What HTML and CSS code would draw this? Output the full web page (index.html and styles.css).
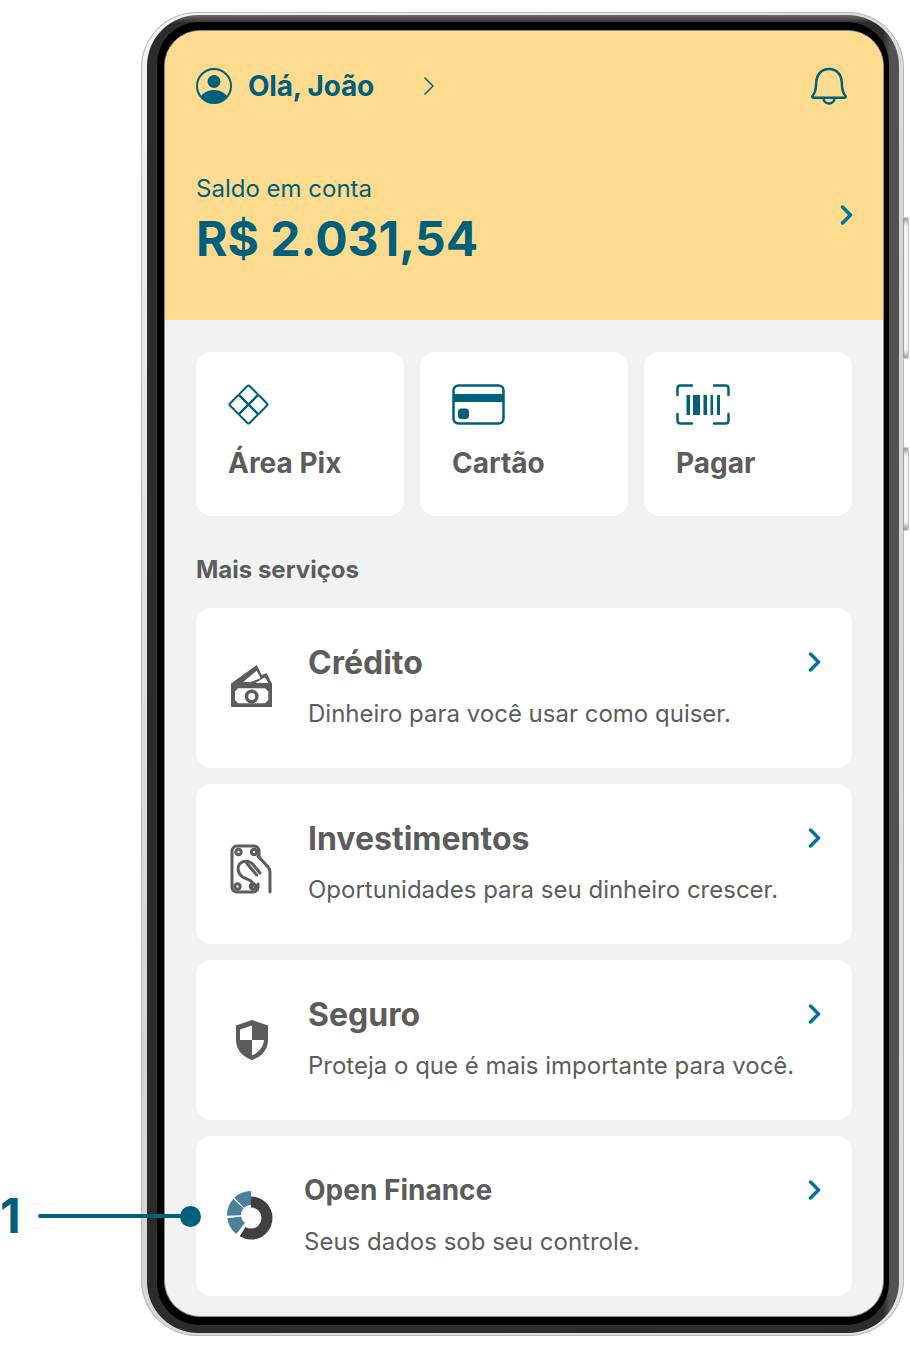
FILE: index.html
```html
<!DOCTYPE html>
<html lang="pt-BR">
    <head>
        <meta charset="UTF-8" />
        <meta name="viewport" content="width=device-width, initial-scale=1.0" />
        <title>Olá, João</title>
        <link rel="stylesheet" href="styles.css">
    </head>
    <body>
        <!--Callout-->
        <div class="callout">
            <span class="callout-num">1</span>
            <span class="callout-line"></span>
            <span class="callout-dot"></span>
        </div>

        <!--Phone frame-->
        <div class="phone">
            <span class="side-btn side-btn-a"></span>
            <span class="side-btn side-btn-b"></span>
            <div class="bezel">
                <div class="black">
                    <main class="screen">
                        <header class="top">
                            <div class="greet">
                                <svg class="avatar" viewBox="0 0 36 36">
                                    <defs><clipPath id="avatar-clip"><circle cx="18" cy="18" r="16.5"/></clipPath></defs>
                                    <circle cx="18" cy="13.5" r="6.5" class="ic-fill"/>
                                    <ellipse cx="18" cy="32" rx="14" ry="10" class="ic-fill" clip-path="url(#avatar-clip)"/>
                                    <circle cx="18" cy="18" r="17" class="ic-line" stroke-width="2"/>
                                </svg>
                                <span class="greet-name">Olá, João</span>
                                <svg class="greet-arrow" viewBox="0 0 12 20"><path d="M2 2l8 8-8 8" class="ic-line" stroke-width="1.5"/></svg>
                                <svg class="bell" viewBox="0 0 38 38">
                                    <path d="M2.5 29c2.6-3 3.6-5.5 3.6-12C6.100 8 11 2 19 2s12.900 6 12.900 15c0 6.500 1 9 3.600 12 .6.8.1 1.700-1 1.700H3.500c-1.100 0-1.600-.9-1-1.700z" class="ic-line" stroke-width="2.500"/>
                                    <path d="M13.500 31c0 3.200 2.400 5.500 5.500 5.500s5.500-2.300 5.500-5.500" class="ic-line" stroke-width="2.500"/>
                                </svg>
                            </div>
                            <div class="balance">
                                <div>
                                    <div class="balance-label">Saldo em conta</div>
                                    <div class="balance-value">R$ 2.031,54</div>
                                </div>
                                <svg class="chevron" viewBox="0 0 14 20"><path d="M2.500 2l8 8-8 8" class="ic-chev"/></svg>
                            </div>
                        </header>

                        <section class="shortcuts">
                            <a class="shortcut">
                                <svg class="shortcut-icon" viewBox="0 0 40 40">
                                    <g transform="rotate(45 20 20)" class="ic-line" stroke-width="2">
                                        <rect x="6.500" y="6.500" width="13.500" height="13.500" rx="1.500"/>
                                        <rect x="20" y="6.500" width="13.500" height="13.500" rx="1.500"/>
                                        <rect x="6.500" y="20" width="13.500" height="13.500" rx="1.500"/>
                                        <rect x="20" y="20" width="13.500" height="13.500" rx="1.500"/>
                                    </g>
                                </svg>
                                <span>Área Pix</span>
                            </a>
                            <a class="shortcut">
                                <svg class="shortcut-icon" viewBox="0 0 54 41">
                                    <rect x="1.500" y="1.500" width="50" height="38" rx="5" class="ic-line" stroke-width="2.500"/>
                                    <rect x="1" y="10" width="51" height="8" class="ic-fill"/>
                                    <rect x="6" y="24.500" width="11" height="10.500" rx="3.500" class="ic-fill"/>
                                </svg>
                                <span>Cartão</span>
                            </a>
                            <a class="shortcut">
                                <svg class="shortcut-icon" viewBox="0 0 54 41">
                                    <path d="M1.500 11V4.500c0-1.700 1.300-3 3-3H16M38 1.500h11.500c1.700 0 3 1.300 3 3V11M1.500 30v6.500c0 1.700 1.300 3 3 3H16M38 39.500h11.500c1.700 0 3-1.300 3-3V30" class="ic-line" stroke-width="2.500"/>
                                    <rect x="10.500" y="11" width="3.500" height="20" class="ic-fill"/>
                                    <rect x="17" y="11" width="7" height="20" class="ic-fill"/>
                                    <rect x="27.500" y="11" width="3.500" height="20" class="ic-fill"/>
                                    <rect x="34.500" y="11" width="2.500" height="20" class="ic-fill"/>
                                    <rect x="41" y="11" width="3" height="20" class="ic-fill"/>
                                </svg>
                                <span>Pagar</span>
                            </a>
                        </section>

                        <h2 class="section-title">Mais serviços</h2>

                        <section class="services">
                            <a class="service">
                                <span class="service-icon">
                                    <svg class="ic-money" viewBox="0 0 42 42">
                                        <path d="M0 18.500L25.700 0l5 10 5-1.700 5 10.200z" class="ic-gray"/>
                                        <path d="M12.300 16.700L25.700 5.700l4 7.600-10.700 4z" class="ic-white"/>
                                        <path d="M24 18.300l10-6 3.300 6z" class="ic-white"/>
                                        <rect x="0" y="18" width="41" height="24" class="ic-gray"/>
                                        <path d="M7 23.300h27l3.300 3.200v8.500L34 38.300H7L4 35v-8.500z" class="ic-white"/>
                                        <circle cx="20.700" cy="31.500" r="5.200" fill="none" stroke="#5c5c5c" stroke-width="3.500"/>
                                    </svg>
                                </span>
                                <span class="service-text">
                                    <span class="service-title">Crédito</span>
                                    <span class="service-sub">Dinheiro para você usar como quiser.</span>
                                </span>
                                <svg class="chevron" viewBox="0 0 14 20"><path d="M2.500 2l8 8-8 8" class="ic-chev"/></svg>
                            </a>
                            <a class="service">
                                <span class="service-icon">
                                    <svg class="ic-invest" viewBox="0 0 44 50">
                                        <g class="ic-gray-line">
                                            <path d="M29 13V7c0-2.800-2.200-5-5-5H7C4.200 2 2 4.200 2 7v36c0 2.800 2.200 5 5 5h16c2.800 0 5-2.200 5-5v-3"/>
                                            <circle cx="8.500" cy="8" r="2.700"/>
                                            <circle cx="24" cy="8" r="2.700"/>
                                            <circle cx="7.500" cy="42.500" r="2.700"/>
                                            <circle cx="23" cy="42.500" r="2.700"/>
                                            <path d="M28 12l10 11c1.300 1.400 2 3 2 5v20"/>
                                            <path d="M30 29L23 20.500c-3.500-4-9.500-4.500-13-1-3 3-2.500 9.500 2 13 3 2.300 8 3 10 5.500.8 1.200.8 3 .3 4.700"/>
                                            <path d="M16.700 19.300L26.700 31"/>
                                        </g>
                                    </svg>
                                </span>
                                <span class="service-text">
                                    <span class="service-title">Investimentos</span>
                                    <span class="service-sub">Oportunidades para seu dinheiro crescer.</span>
                                </span>
                                <svg class="chevron" viewBox="0 0 14 20"><path d="M2.500 2l8 8-8 8" class="ic-chev"/></svg>
                            </a>
                            <a class="service">
                                <span class="service-icon">
                                    <svg class="ic-shield" viewBox="0 0 32 40">
                                        <path d="M16 0l16 5.500V20c0 10-7 17-16 20C7 37 0 30 0 20V5.500z" class="ic-gray"/>
                                        <path d="M16 5.500L4 9.500V20h12z" class="ic-white"/>
                                        <path d="M16 20h12c-.8 7.500-5.500 12.500-12 15.500z" class="ic-white"/>
                                    </svg>
                                </span>
                                <span class="service-text">
                                    <span class="service-title">Seguro</span>
                                    <span class="service-sub">Proteja o que é mais importante para você.</span>
                                </span>
                                <svg class="chevron" viewBox="0 0 14 20"><path d="M2.500 2l8 8-8 8" class="ic-chev"/></svg>
                            </a>
                            <a class="service service-open">
                                <span class="service-icon">
                                    <svg class="ic-donut" viewBox="0 0 48 52">
                                        <circle cx="25" cy="29" r="16" pathLength="360" stroke-dasharray="212 360" transform="rotate(-90 25 29)" class="donut-dark"/>
                                        <circle cx="25" cy="26" r="17" pathLength="360" stroke-dasharray="44 360" transform="rotate(128 25 26)" class="donut-blue"/>
                                        <circle cx="25" cy="26" r="17" pathLength="360" stroke-dasharray="44 360" transform="rotate(178 25 26)" class="donut-blue"/>
                                        <circle cx="25" cy="26" r="17" pathLength="360" stroke-dasharray="44 360" transform="rotate(226 25 26)" class="donut-blue"/>
                                    </svg>
                                </span>
                                <span class="service-text">
                                    <span class="service-title">Open Finance</span>
                                    <span class="service-sub">Seus dados sob seu controle.</span>
                                </span>
                                <svg class="chevron" viewBox="0 0 14 20"><path d="M2.500 2l8 8-8 8" class="ic-chev"/></svg>
                            </a>
                        </section>
                    </main>
                </div>
            </div>
        </div>
    </body>
</html>
```

FILE: styles.css
```css
:root {
    --teal: #005f7a;
    --chevron: #00779a;
    --yellow: #fcdb8f;
    --gray-bg: #f2f2f2;
    --gray-text: #5c5c5c;
}
html, body {
    height: 1348px;
    overflow: hidden;
}
body {
    margin: 0;
    padding: 12px 0 0 141px;
    box-sizing: border-box;
    position: relative;
    background-color: white;
    font-family: Inter, "Liberation Sans", sans-serif;
}

/* Phone frame */
.phone {
    position: relative;
    box-sizing: border-box;
    width: 763px;
    height: 1324px;
    padding: 3px 5px 3px 6px;
    border-radius: 56px;
    background: linear-gradient(135deg, #f4f4f4, #d4d4d4 50%, #e2e2e2);
    box-shadow: inset 0 0 0 1px #b8b8b8;
}
.bezel {
    box-sizing: border-box;
    height: 100%;
    padding: 7px 10px 8px 10px;
    border-radius: 51px;
    background:
        linear-gradient(180deg, #6e6e6e, rgba(60, 60, 60, 0) 8px),
        linear-gradient(90deg, #2c2c2c, #2c2c2c calc(100% - 16px), #525252 calc(100% - 9px));
}
.black {
    box-sizing: border-box;
    height: 100%;
    padding: 8px 5px 8px 7px;
    border-radius: 42px;
    background-color: #000;
}
.screen {
    box-sizing: border-box;
    height: 100%;
    border: 1px solid #8a8a8a;
    border-radius: 36px;
    overflow: hidden;
    background-color: var(--gray-bg);
}
.side-btn {
    position: absolute;
    left: 762px;
    width: 4px;
    background: linear-gradient(180deg, #9a9a9a, #f4f4f4 8px, #f4f4f4 calc(100% - 8px), #9a9a9a);
    border: 1px solid #c4c4c4;
    border-left-color: #a0a0a0;
    border-radius: 0 3px 3px 0;
}
.side-btn-a {
    top: 205px;
    height: 140px;
}
.side-btn-b {
    top: 435px;
    height: 82px;
}

/* Callout */
.callout {
    position: absolute;
    z-index: 2;
    left: 0;
    top: 1193px;
    width: 202px;
    height: 46px;
    display: flex;
    align-items: center;
}
.callout-num {
    width: 38px;
    color: var(--teal);
    font-size: 48px;
    font-weight: 700;
    line-height: 46px;
}
.callout-line {
    width: 150px;
    height: 4px;
    border-radius: 2px;
    background-color: var(--teal);
}
.callout-dot {
    width: 21px;
    height: 21px;
    margin-left: -8px;
    border-radius: 50%;
    background-color: var(--teal);
}

/* Header */
.top {
    box-sizing: border-box;
    height: 289px;
    padding: 37px 29px 0 31px;
    background-color: var(--yellow);
    color: var(--teal);
}
.greet {
    display: flex;
    align-items: center;
    height: 36px;
}
.avatar {
    width: 36px;
    height: 36px;
}
.greet-name {
    margin-left: 16px;
    font-size: 28px;
    font-weight: 700;
    letter-spacing: -0.2px;
}
.greet-arrow {
    width: 12px;
    height: 20px;
    margin-left: 49px;
}
.bell {
    width: 38px;
    height: 38px;
    margin-left: auto;
    margin-right: 6px;
}
.balance {
    display: flex;
    align-items: center;
    justify-content: space-between;
    margin-top: 69px;
}
.balance-label {
    font-size: 24px;
    line-height: 32px;
}
.balance-value {
    margin-top: 4px;
    font-size: 48px;
    font-weight: 700;
    line-height: 60px;
}
.chevron {
    flex: none;
    width: 14px;
    height: 20px;
}
.balance .chevron {
    margin-bottom: 13px;
}

/* Icon paints */
svg {
    display: block;
}
.ic-fill {
    fill: var(--teal);
}
.ic-line {
    fill: none;
    stroke: var(--teal);
    stroke-linecap: round;
    stroke-linejoin: round;
}
.ic-chev {
    fill: none;
    stroke: var(--chevron);
    stroke-width: 3.500;
    stroke-linecap: round;
    stroke-linejoin: round;
}
.ic-gray {
    fill: var(--gray-text);
}
.ic-white {
    fill: white;
}
.ic-gray-line {
    fill: none;
    stroke: var(--gray-text);
    stroke-width: 3;
    stroke-linecap: round;
    stroke-linejoin: round;
}
.donut-dark {
    fill: none;
    stroke: #404040;
    stroke-width: 11;
}
.donut-blue {
    fill: none;
    stroke: #4a819b;
    stroke-width: 14;
}

/* Shortcuts */
.shortcuts {
    display: grid;
    grid-template-columns: repeat(3, 208px);
    gap: 16px;
    margin: 32px 0 0 31px;
}
.shortcut {
    box-sizing: border-box;
    height: 164px;
    padding: 32px 32px 0;
    border-radius: 16px;
    background-color: white;
    color: var(--gray-text);
    font-size: 28px;
    font-weight: 700;
}
.shortcut span {
    display: block;
    margin-top: 20px;
    line-height: 36px;
}
.shortcut-icon {
    height: 41px;
}

.section-title {
    margin: 36px 0 0 31px;
    color: var(--gray-text);
    font-size: 24px;
    font-weight: 700;
    line-height: 36px;
}

/* Services */
.services {
    display: grid;
    grid-template-columns: 656px;
    gap: 16px;
    margin: 20px 0 0 31px;
}
.service {
    box-sizing: border-box;
    height: 160px;
    padding-right: 30px;
    display: flex;
    align-items: flex-start;
    border-radius: 16px;
    background-color: white;
}
.service > .chevron {
    margin-top: 44px;
}
.service-icon {
    flex: none;
    width: 112px;
    height: 160px;
    box-sizing: border-box;
    padding-left: 32px;
    display: flex;
    align-items: center;
}
.service-text {
    flex: 1;
    display: flex;
    flex-direction: column;
    padding-top: 33px;
}
.service-title {
    color: var(--gray-text);
    font-size: 32px;
    font-weight: 700;
    line-height: 44px;
}
.service-sub {
    margin-top: 13px;
    color: var(--gray-text);
    font-size: 24px;
    line-height: 32px;
}
.service-open .service-icon {
    width: 108px;
}
.service-open .service-text {
    padding-top: 32px;
}
.service-open .service-title {
    font-size: 28px;
}
.service-open .service-sub {
    margin-top: 14px;
}
.ic-money {
    width: 42px;
    height: 42px;
    margin: 0 0 4px 3px;
}
.ic-invest {
    width: 44px;
    height: 50px;
    margin: 10px 0 0 2px;
}
.ic-shield {
    width: 32px;
    height: 40px;
    margin: 0 0 0 8px;
}
.ic-donut {
    width: 48px;
    height: 52px;
    margin-left: -2px;
    margin-top: -2px;
}
```
